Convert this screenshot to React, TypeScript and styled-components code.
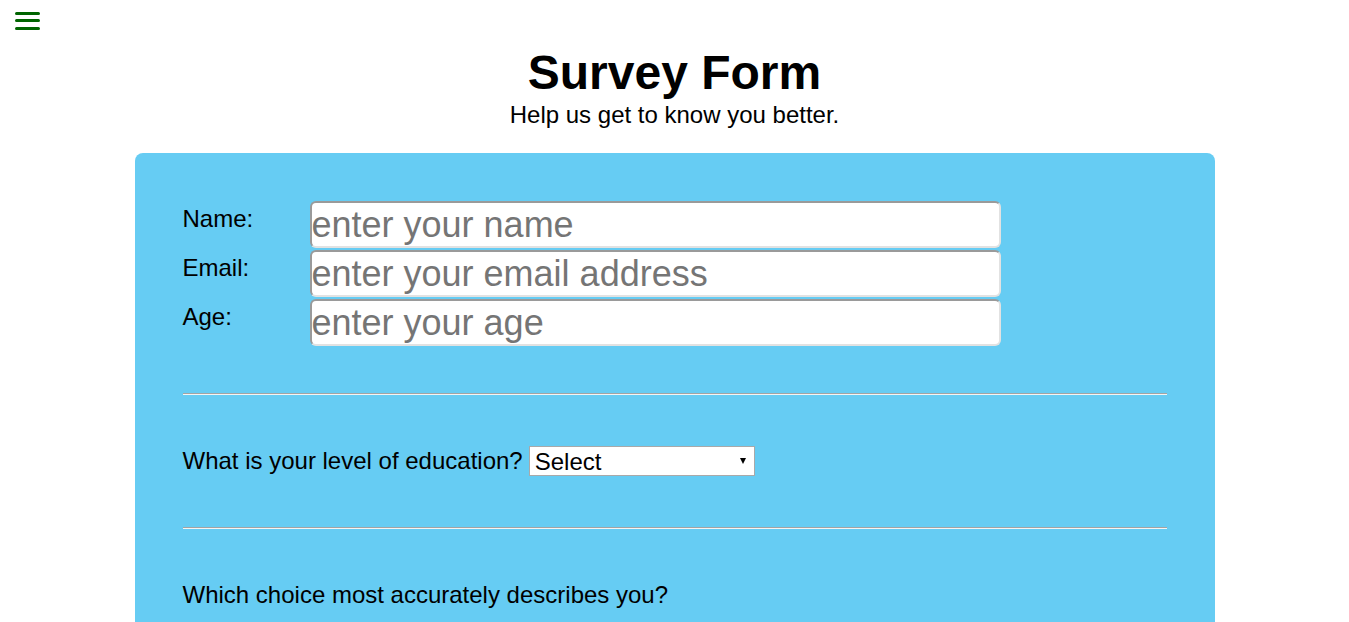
import React from "react";
import styled, { createGlobalStyle } from "styled-components";

const GlobalStyle = createGlobalStyle`
  html, body {
    margin: 0;
    padding: 0;
    overflow: hidden;
    background: #ffffff;
  }
  body {
    font-family: "Liberation Sans", Arial, sans-serif;
    color: #000;
  }
`;

const MenuButton = styled.button`
  position: absolute;
  top: 8px;
  left: 11px;
  width: 33px;
  height: 27px;
  padding: 0;
  border: none;
  background: transparent;
  cursor: pointer;
  svg {
    display: block;
  }
`;

const Header = styled.header`
  padding-top: 45px;
  text-align: center;
`;

const Title = styled.h1`
  margin: 0;
  font-size: 48px;
  font-weight: 700;
  line-height: normal;
`;

const Subtitle = styled.p`
  margin: 1px 0 0;
  font-size: 24px;
  line-height: normal;
`;

const FormCard = styled.form`
  width: 1080px;
  box-sizing: border-box;
  margin: 24px auto 0;
  padding: 48px 48px 120px;
  background: #66ccf3;
  border-radius: 8px;
  font-size: 24px;
`;

const FieldGrid = styled.div`
  display: grid;
  grid-template-columns: 127px 691px;
  row-gap: 2px;
`;

const FieldLabel = styled.label`
  padding-top: 4px;
  line-height: normal;
`;

const TextInput = styled.input`
  box-sizing: border-box;
  width: 691px;
  height: 47px;
  margin: 0;
  padding: 0 2px 0 0;
  border-width: 2px;
  border-style: solid;
  border-color: #9a9a9a #e2e2e2 #e2e2e2 #9a9a9a;
  border-radius: 6px;
  background: #fff;
  font-family: "Liberation Sans", Arial, sans-serif;
  font-size: 36px;
  color: #000;
  outline: none;
  &::placeholder {
    color: #757575;
  }
`;

const Divider = styled.hr<{ $top: number }>`
  margin: ${(p) => p.$top}px 0 0;
  height: 0;
  border: none;
  border-top: 1px solid #a3a3a3;
  border-bottom: 1px solid #f4f4f4;
`;

const QuestionRow = styled.div`
  display: flex;
  align-items: center;
  gap: 6px;
  margin-top: 51px;
  line-height: normal;
`;

const SelectWrap = styled.span`
  position: relative;
  display: inline-block;
  &::after {
    content: "";
    position: absolute;
    right: 9px;
    top: 12px;
    border-left: 3px solid transparent;
    border-right: 3px solid transparent;
    border-top: 6px solid #000;
    pointer-events: none;
  }
`;

const Select = styled.select`
  appearance: none;
  -webkit-appearance: none;
  box-sizing: border-box;
  width: 226px;
  height: 30px;
  margin: 0;
  padding: 0 0 0 5px;
  border: 1px solid #a9a9a9;
  border-radius: 0;
  background: #fff;
  font-family: "Liberation Sans", Arial, sans-serif;
  font-size: 24px;
  color: #000;
  outline: none;
`;

const Question = styled.p`
  margin: 52px 0 0;
  line-height: normal;
`;

export default function App() {
  return (
    <>
      <GlobalStyle />
      <MenuButton aria-label="menu" type="button">
        <svg width="33" height="27" viewBox="0 0 33 27">
          <rect x="4" y="4" width="25" height="3" rx="1.5" fill="#006400" />
          <rect x="4" y="11" width="25" height="3" rx="1.5" fill="#006400" />
          <rect x="4" y="19" width="25" height="3" rx="1.5" fill="#006400" />
        </svg>
      </MenuButton>
      <Header>
        <Title>Survey Form</Title>
        <Subtitle>Help us get to know you better.</Subtitle>
      </Header>
      <FormCard onSubmit={(e) => e.preventDefault()}>
        <FieldGrid>
          <FieldLabel htmlFor="name">Name:</FieldLabel>
          <TextInput id="name" type="text" placeholder="enter your name" />
          <FieldLabel htmlFor="email">Email:</FieldLabel>
          <TextInput id="email" type="email" placeholder="enter your email address" />
          <FieldLabel htmlFor="age">Age:</FieldLabel>
          <TextInput id="age" type="number" placeholder="enter your age" />
        </FieldGrid>
        <Divider $top={47} />
        <QuestionRow>
          <span>What is your level of education?</span>
          <SelectWrap>
            <Select defaultValue="">
              <option value="">Select</option>
              <option value="hs">High School</option>
              <option value="bachelor">Bachelor's Degree</option>
              <option value="master">Master's Degree</option>
              <option value="phd">Doctorate</option>
            </Select>
          </SelectWrap>
        </QuestionRow>
        <Divider $top={51} />
        <Question>Which choice most accurately describes you?</Question>
      </FormCard>
    </>
  );
}
